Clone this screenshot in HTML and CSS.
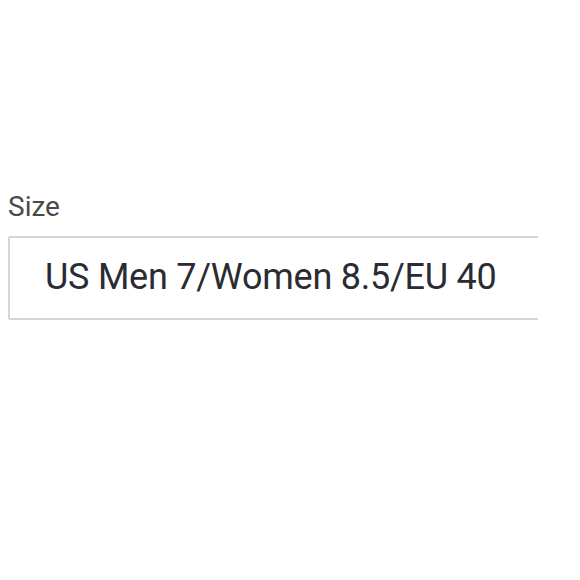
FILE: index.html
```html
<!DOCTYPE html>
<html>
<head>
<meta charset="utf-8">
<link rel="stylesheet" href="styles.css">
</head>
<body>
<div class="field">
  <label class="label">Size</label>
  <div class="clip">
    <div class="select">US Men 7/Women 8.5/EU 40</div>
  </div>
</div>
</body>
</html>
```
FILE: styles.css
```css
html, body {
  margin: 0;
  padding: 0;
  background: #fff;
}
body {
  font-family: Roboto, "Liberation Sans", sans-serif;
}
.field {
  padding: 187px 0 0 8px;
  display: flex;
  flex-direction: column;
}
.label {
  font-size: 28px;
  line-height: 40px;
  color: #4a4a4a;
  margin-bottom: 9px;
}
.clip {
  width: 530px;
  overflow: hidden;
}
.select {
  width: 600px;
  height: 84px;
  box-sizing: border-box;
  border: 2px solid #d6d6d6;
  border-radius: 2px;
  padding-left: 35px;
  padding-bottom: 3px;
  display: flex;
  align-items: center;
  font-size: 36px;
  letter-spacing: -0.25px;
  color: #2b2b33;
  white-space: nowrap;
}
```
